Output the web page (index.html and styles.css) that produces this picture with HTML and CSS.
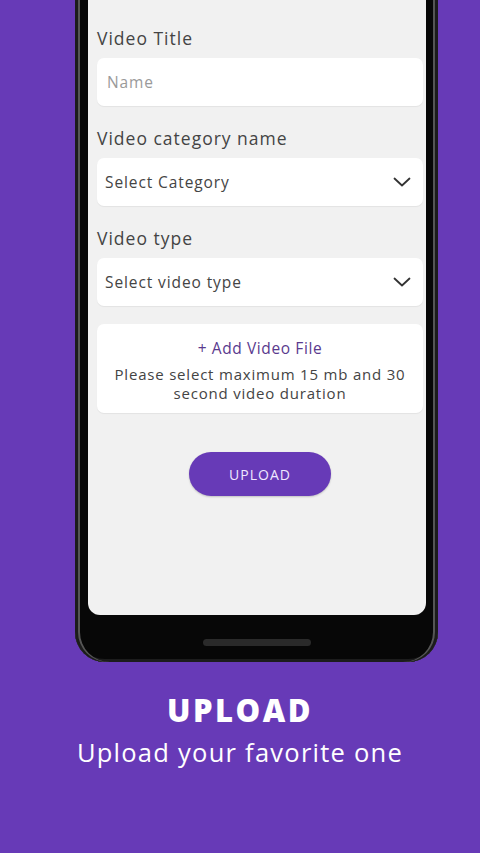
FILE: index.html
```html
<!DOCTYPE html>
<html>
<head>
<meta charset="utf-8">
<link rel="stylesheet" href="styles.css">
</head>
<body>
<div class="page">
  <div class="phone">
    <div class="screen">
      <div class="field">
        <div class="label">Video Title</div>
        <div class="input placeholder">Name</div>
      </div>
      <div class="field">
        <div class="label">Video category name</div>
        <div class="input select">
          <span>Select Category</span>
          <svg class="chev" width="18" height="10" viewBox="0 0 18 10"><path d="M1.5 1.5 L9 8.5 L16.5 1.5" fill="none" stroke="#333" stroke-width="1.8" stroke-linecap="round" stroke-linejoin="round"/></svg>
        </div>
      </div>
      <div class="field">
        <div class="label">Video type</div>
        <div class="input select">
          <span>Select video type</span>
          <svg class="chev" width="18" height="10" viewBox="0 0 18 10"><path d="M1.5 1.5 L9 8.5 L16.5 1.5" fill="none" stroke="#333" stroke-width="1.8" stroke-linecap="round" stroke-linejoin="round"/></svg>
        </div>
      </div>
      <div class="filebox">
        <div class="add">+ Add Video File</div>
        <div class="note">Please select maximum 15 mb and 30<br>second video duration</div>
      </div>
      <div class="btnrow"><div class="btn">UPLOAD</div></div>
    </div>
    <div class="homebar"></div>
  </div>
  <div class="title">UPLOAD</div>
  <div class="subtitle">Upload your favorite one</div>
</div>
</body>
</html>
```

FILE: styles.css
```css
html, body {
  margin: 0;
  padding: 0;
  background: #673ab7;
}
.page {
  width: 480px;
  height: 853px;
  overflow: hidden;
  background: #673ab7;
  font-family: "Open Sans", sans-serif;
}
.phone {
  margin-left: 75px;
  width: 363px;
  height: 662px;
  box-sizing: border-box;
  background: #070707;
  border-radius: 0 0 30px 30px;
  padding: 0 12px 0 13px;
  box-shadow: inset 3px 0 0 #1c1c1c, inset -3px 0 0 #1c1c1c, inset 5px 0 0 #555, inset -5px 0 0 #555, inset 0 -3px 0 #1c1c1c;
  display: flex;
  flex-direction: column;
  align-items: center;
}
.screen {
  width: 100%;
  height: 615px;
  box-sizing: border-box;
  background: #f1f1f1;
  border-radius: 0 0 12px 12px;
  padding: 28px 3px 0 9px;
  display: flex;
  flex-direction: column;
}
.field {
  display: flex;
  flex-direction: column;
  gap: 10px;
  margin-bottom: 22px;
}
.label {
  font-size: 17.5px;
  line-height: 20px;
  color: #444;
  letter-spacing: 1px;
}
.input {
  height: 48px;
  background: #fff;
  border-radius: 7px;
  box-sizing: border-box;
  padding: 0 12px 0 10px;
  display: flex;
  align-items: center;
  font-size: 15.5px;
  color: #444;
  letter-spacing: 0.9px;
  box-shadow: 0 1px 1px rgba(0,0,0,0.06);
}
.placeholder {
  color: #9a9a9a;
  padding-left: 10px;
}
.select {
  justify-content: space-between;
  padding-left: 8px;
}
.chev {
  display: block;
}
.filebox {
  margin-top: -4px;
  height: 89px;
  background: #fff;
  border-radius: 7px;
  box-sizing: border-box;
  padding-top: 15px;
  text-align: center;
  box-shadow: 0 1px 1px rgba(0,0,0,0.06);
}
.add {
  color: #5a3a8e;
  font-size: 15.5px;
  line-height: 19px;
  margin-bottom: 7px;
  letter-spacing: 0.6px;
}
.note {
  color: #444;
  font-size: 15px;
  line-height: 19px;
  letter-spacing: 0.8px;
}
.btnrow {
  display: flex;
  justify-content: center;
  margin-top: 39px;
}
.btn {
  width: 142px;
  height: 44px;
  border-radius: 22px;
  background: #673ab7;
  color: #f0e8ff;
  font-size: 14px;
  letter-spacing: 1px;
  display: flex;
  align-items: center;
  justify-content: center;
  box-shadow: 0 1px 2px rgba(0,0,0,0.2);
}
.homebar {
  margin-top: 24px;
  width: 108px;
  height: 7px;
  border-radius: 4px;
  background: #2a2a2a;
}
.title {
  margin-top: 30px;
  text-align: center;
  color: #fff;
  font-family: "Open Sans", sans-serif;
  font-weight: 800;
  font-size: 31px;
  line-height: 36px;
  letter-spacing: 2.5px;
}
.subtitle {
  margin-top: 9px;
  text-align: center;
  color: #fff;
  font-family: "Open Sans", sans-serif;
  font-size: 25.5px;
  line-height: 30px;
  letter-spacing: 1.25px;
}
```
